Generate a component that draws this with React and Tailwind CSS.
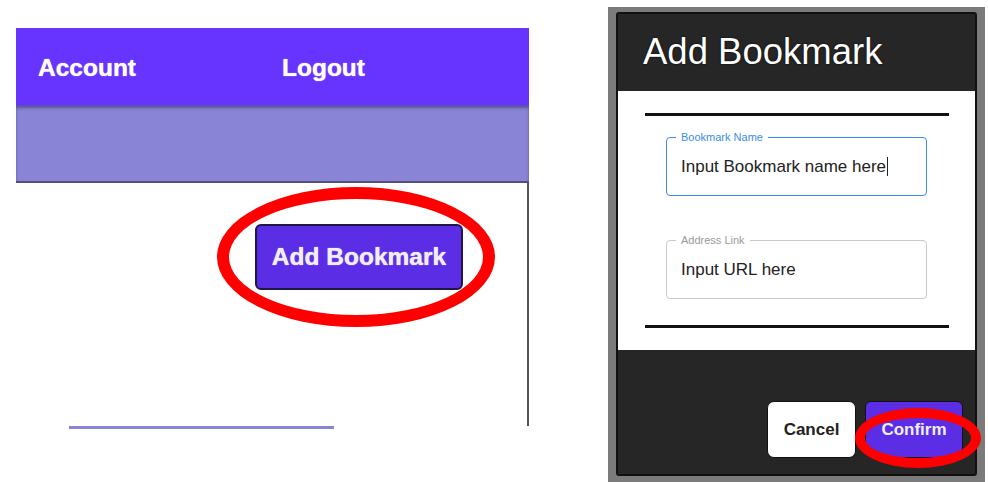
import { useState } from 'react'

function FieldBox({ label, value, focused }) {
  return (
    <div
      className={`relative h-[59px] w-[261px] rounded-[4px] border ${
        focused ? 'border-[#3a8ee6]' : 'border-[#c9c9c9]'
      }`}
    >
      <span
        className={`absolute -top-[8px] left-[9px] bg-white px-[5px] text-[11px] leading-[14px] ${
          focused ? 'text-[#3a8ee6]' : 'text-[#9a9a9a]'
        }`}
      >
        {label}
      </span>
      <div className="flex h-full items-center pl-[14px] text-[17px] text-[#222]">
        {value}
        {focused && <span className="ml-[1px] inline-block h-[19px] w-[1px] bg-[#222]" />}
      </div>
    </div>
  )
}

export default function App() {
  const [name] = useState('Input Bookmark name here')

  return (
    <div className="relative flex h-[482px] w-[988px] overflow-hidden bg-white [font-family:Liberation_Sans,Arial,sans-serif]">
      {/* left: page with the Add Bookmark button */}
      <div className="ml-[16px] mt-[28px] w-[513px]">
        <div className="flex h-[77px] items-center bg-[#6633ff] pl-[22px] pt-[3px] text-[24.5px] font-bold text-white [text-shadow:0_0_1px_#fff]">
          <span className="w-[244px]">Account</span>
          <span>Logout</span>
        </div>
        <div className="h-[78px] border-b-2 border-[#55507a] bg-[#8a84d6] shadow-[inset_0_3px_3px_rgba(40,20,90,0.45)]" />
        <div className="relative h-[243px] border-r-2 border-[#555]">
          <button className="ml-[239px] mt-[41px] h-[66px] w-[208px] rounded-[6px] border-2 border-[#1e1745] bg-[#5b2ee6] text-[24.5px] font-bold text-[#f1eefc] [text-shadow:0_0_1px_#fff]">
            Add Bookmark
          </button>
          {/* red annotation ring */}
          <div className="absolute left-[201px] top-[4px] h-[140px] w-[278px] rounded-[50%] border-[12px] border-[#ff0000]" />
        </div>
        <div className="ml-[53px] h-[3px] w-[265px] bg-[#8a84d6]" />
      </div>

      {/* right: the dialog */}
      <div className="ml-[79px] mt-[7px] h-[480px] w-[377px] bg-[#7b7b7b] px-[8px] pt-[5px] pb-[11px]">
        <div className="flex h-full flex-col rounded-[3px] border-2 border-[#111] bg-[#262626]">
          <div className="flex h-[77px] items-center pl-[25px]">
            <h1 className="text-[36.5px] leading-none text-white [text-shadow:0_0_2px_#000]">Add Bookmark</h1>
          </div>
          <div className="flex h-[259px] flex-col items-center bg-white pt-[22px]">
            <div className="h-[3px] w-[304px] bg-[#111]" />
            <div className="mt-[21px]">
              <FieldBox label="Bookmark Name" value={name} focused />
            </div>
            <div className="mt-[44px]">
              <FieldBox label="Address Link" value="Input URL here" />
            </div>
            <div className="mt-[26px] h-[3px] w-[304px] bg-[#111]" />
          </div>
          <div className="relative flex flex-1 items-start justify-end gap-[9px] pr-[12px] pt-[51px]">
            <button className="h-[57px] w-[89px] rounded-[7px] border border-[#111] bg-white text-[17px] font-bold text-[#222]">
              Cancel
            </button>
            <button className="h-[57px] w-[98px] rounded-[6px] border border-[#111] bg-[#5b2ee6] text-[17px] font-bold text-[#f1eefc]">
              Confirm
            </button>
            <div className="absolute right-[-6px] top-[58px] h-[60px] w-[126px] rounded-[50%] border-[10px] border-[#ff0000]" />
          </div>
        </div>
      </div>
    </div>
  )
}
